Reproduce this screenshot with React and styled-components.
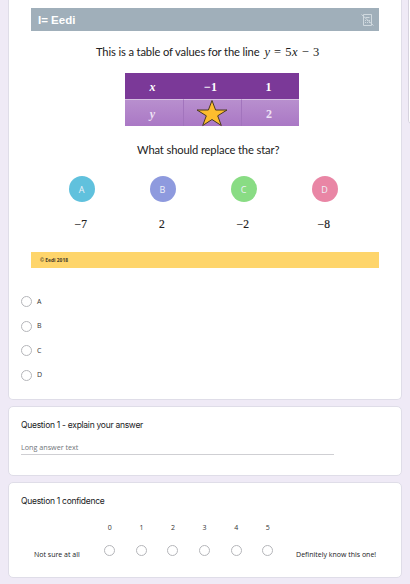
import React from 'react';
import styled, { createGlobalStyle } from 'styled-components';

const GlobalStyle = createGlobalStyle`
  * {
    box-sizing: border-box;
  }
  body {
    margin: 0;
    background: #efeaf6;
    overflow: hidden;
    font-family: Lato, 'Open Sans', sans-serif;
  }
`;

const Page = styled.main`
  position: relative;
  display: flex;
  flex-direction: column;
  width: 410px;
  height: 584px;
  padding-left: 8px;
  overflow: hidden;
  background: #efeaf6;
`;

// Floating toolbar, only its left edge is inside the window
const SideToolbar = styled.aside`
  position: absolute;
  top: -10px;
  left: 408px;
  width: 40px;
  height: 135px;
  background: #fff;
  border: 1px solid #d5d2de;
  border-radius: 5px;
`;

const Card = styled.section`
  width: 394px;
  height: ${props => props.height}px;
  flex: none;
  margin-bottom: ${props => props.gap || 0}px;
  padding: ${props => props.pad || '0'};
  background: #fff;
  border: 1px solid #dfdde8;
  border-radius: 5px;
`;

const QuestionCard = styled(Card)`
  border-top: 0;
  border-radius: 0 0 5px 5px;
`;

const Slide = styled.div`
  display: flex;
  flex-direction: column;
  width: 348px;
  margin-left: 22px;
`;

const SlideHeader = styled.header`
  display: flex;
  align-items: center;
  justify-content: space-between;
  height: 23px;
  margin-top: 8px;
  padding: 1px 5px 0 7px;
  background: #a0afba;
`;

const Brand = styled.span`
  color: #fff;
  font: bold 11.5px/22px 'Liberation Sans', sans-serif;
`;

const Prompt = styled.p`
  display: flex;
  height: 18px;
  margin: 12px 0 0 65px;
  color: #222;
  font-size: 11.2px;
  line-height: 18px;
  letter-spacing: -0.14px;
  white-space: pre;
`;

const Equation = styled.span`
  margin-left: 5px;
  font: 12.5px/18px 'Liberation Serif', serif;
  letter-spacing: 0.5px;
`;

const SecondPrompt = styled(Prompt)`
  margin: 15px 0 0 106px;
`;

const ValueTable = styled.div`
  display: grid;
  grid-template-columns: 58px 58px 58px;
  grid-template-rows: 26px 27px;
  width: 174px;
  margin: 12px 0 0 94px;
`;

const Cell = styled.div`
  display: flex;
  align-items: center;
  justify-content: center;
  padding: 1px 3px 0 0;
  color: ${props => (props.head ? '#fff' : '#eee2f5')};
  background: ${props =>
    props.head ? '#7b3998' : 'linear-gradient(#b88fce, #aa78c5)'};
  border-top: ${props => (props.head ? '0' : '1px solid #d5bfe1')};
  border-left: ${props => (props.divided ? '1px solid #a274bd' : '0')};
  font: ${props => (props.italic ? 'italic' : 'normal')} bold 12px/1
    'Liberation Serif', serif;
`;

const StarCell = styled(Cell)`
  padding: 0 2px 1px 0;
`;

const StarIcon = styled.svg`
  display: block;
  flex: none;
  width: 32px;
  height: 28px;
`;

const Choices = styled.div`
  display: grid;
  grid-template-columns: repeat(4, 81px);
  margin: 17px 0 0 10px;
`;

const Choice = styled.div`
  display: flex;
  flex-direction: column;
  align-items: center;
`;

const Bubble = styled.div`
  width: 26px;
  height: 26px;
  border-radius: 50%;
  background: ${props => props.tone};
  color: #eef1f8;
  font: 9px/27px 'Open Sans', sans-serif;
  text-align: center;
`;

const ChoiceValue = styled.span`
  height: 16px;
  margin: 13px 1px 0 0;
  color: #222;
  font: 11.5px/18px 'Liberation Serif', serif;
  letter-spacing: 0.4px;
  -webkit-text-stroke: 0.2px #222;
`;

const SlideFooter = styled.footer`
  height: 16px;
  margin-top: 21px;
  padding-left: 9px;
  background: #fed56b;
  color: #4a4029;
  font: bold 4.9px/17px 'Open Sans', sans-serif;
`;

const Options = styled.div`
  display: flex;
  flex-direction: column;
  margin: 21.5px 0 0 12px;
`;

const Option = styled.label`
  display: flex;
  align-items: center;
  gap: 5px;
  height: 24.5px;
  color: #333;
  font: 7px/12px 'Open Sans', sans-serif;
`;

const Radio = styled.span`
  flex: none;
  width: 11px;
  height: 11px;
  border: 1px solid #b5b6ba;
  border-radius: 50%;
  background: #fff;
`;

const Title = styled.h2`
  margin: 0;
  color: #202124;
  font: 8.5px/12px Inter, sans-serif;
  letter-spacing: -0.28px;
`;

const AnswerField = styled.div`
  width: 313px;
  height: 13px;
  margin-top: 11px;
  border-bottom: 1px solid #cfcfd3;
  color: #70757a;
  font: 7.2px/11px 'Open Sans', sans-serif;
`;

const Scale = styled.div`
  display: flex;
  height: 60px;
  margin-top: 13px;
`;

const ScaleLabel = styled.span`
  width: ${props => props.width}px;
  padding: 29px 0 0 ${props => props.inset}px;
  color: #202124;
  font: 7px/12px 'Open Sans', sans-serif;
  white-space: nowrap;
`;

const ScalePoint = styled.div`
  display: flex;
  flex-direction: column;
  align-items: center;
  gap: 11px;
  width: 31.6px;
  padding-top: 2px;
  color: #333;
  font: 7px/12px 'Open Sans', sans-serif;
`;

const choices = [
  { letter: 'A', value: '−7', tone: '#60c1dd' },
  { letter: 'B', value: '2', tone: '#8e9ade' },
  { letter: 'C', value: '−2', tone: '#89dc84' },
  { letter: 'D', value: '−8', tone: '#e986a5' }
];

function NoCalculatorIcon() {
  return (
    <svg width="13" height="14" viewBox="0 0 13 14" fill="none" stroke="#d0d9df">
      <path d="M2.5 1.5h8v11h-8z" />
      <path d="M4.5 4.5h4M4 7.5h1M6 7.5h1M8 7.5h1M4 9.5h1M6 9.5h1M8 9.5h1" />
      <path d="M0.5 1.5l12 11" />
    </svg>
  );
}

function Star() {
  return (
    <StarIcon viewBox="0 0 32 28">
      <path
        d="M16 1.5L19.6 11H31L21.7 16.8L25.3 26.5L16 20.5L6.7 26.5L10.3 16.8L1 11H12.4Z"
        fill="#fdbd2e"
        stroke="#49391f"
        strokeWidth="1"
      />
    </StarIcon>
  );
}

function App() {
  return (
    <>
      <GlobalStyle />
      <Page>
        <QuestionCard height={400} gap={6}>
          <Slide>
            <SlideHeader>
              <Brand>I= Eedi</Brand>
              <NoCalculatorIcon />
            </SlideHeader>
            <Prompt>
              This is a table of values for the line
              <Equation>
                <i>y</i> = 5<i>x</i> − 3
              </Equation>
            </Prompt>
            <ValueTable>
              <Cell head italic>x</Cell>
              <Cell head>−1</Cell>
              <Cell head>1</Cell>
              <Cell italic>y</Cell>
              <StarCell divided>
                <Star />
              </StarCell>
              <Cell divided>2</Cell>
            </ValueTable>
            <SecondPrompt>What should replace the star?</SecondPrompt>
            <Choices>
              {choices.map(({ letter, value, tone }) => (
                <Choice key={letter}>
                  <Bubble tone={tone}>{letter}</Bubble>
                  <ChoiceValue>{value}</ChoiceValue>
                </Choice>
              ))}
            </Choices>
            <SlideFooter>© Eedi 2018</SlideFooter>
          </Slide>
          <Options>
            {choices.map(({ letter }) => (
              <Option key={letter}>
                <Radio />
                {letter}
              </Option>
            ))}
          </Options>
        </QuestionCard>
        <Card height={70} gap={6} pad="12px 0 0 12px">
          <Title>Question 1 - explain your answer</Title>
          <AnswerField>Long answer text</AnswerField>
        </Card>
        <Card height={96} pad="12px 0 0 12px">
          <Title>Question 1 confidence</Title>
          <Scale>
            <ScaleLabel width={73} inset={13}>Not sure at all</ScaleLabel>
            {[0, 1, 2, 3, 4, 5].map(point => (
              <ScalePoint key={point}>
                {point}
                <Radio />
              </ScalePoint>
            ))}
            <ScaleLabel width={100} inset={12.5}>Definitely know this one!</ScaleLabel>
          </Scale>
        </Card>
        <SideToolbar />
      </Page>
    </>
  );
}

export default App;
